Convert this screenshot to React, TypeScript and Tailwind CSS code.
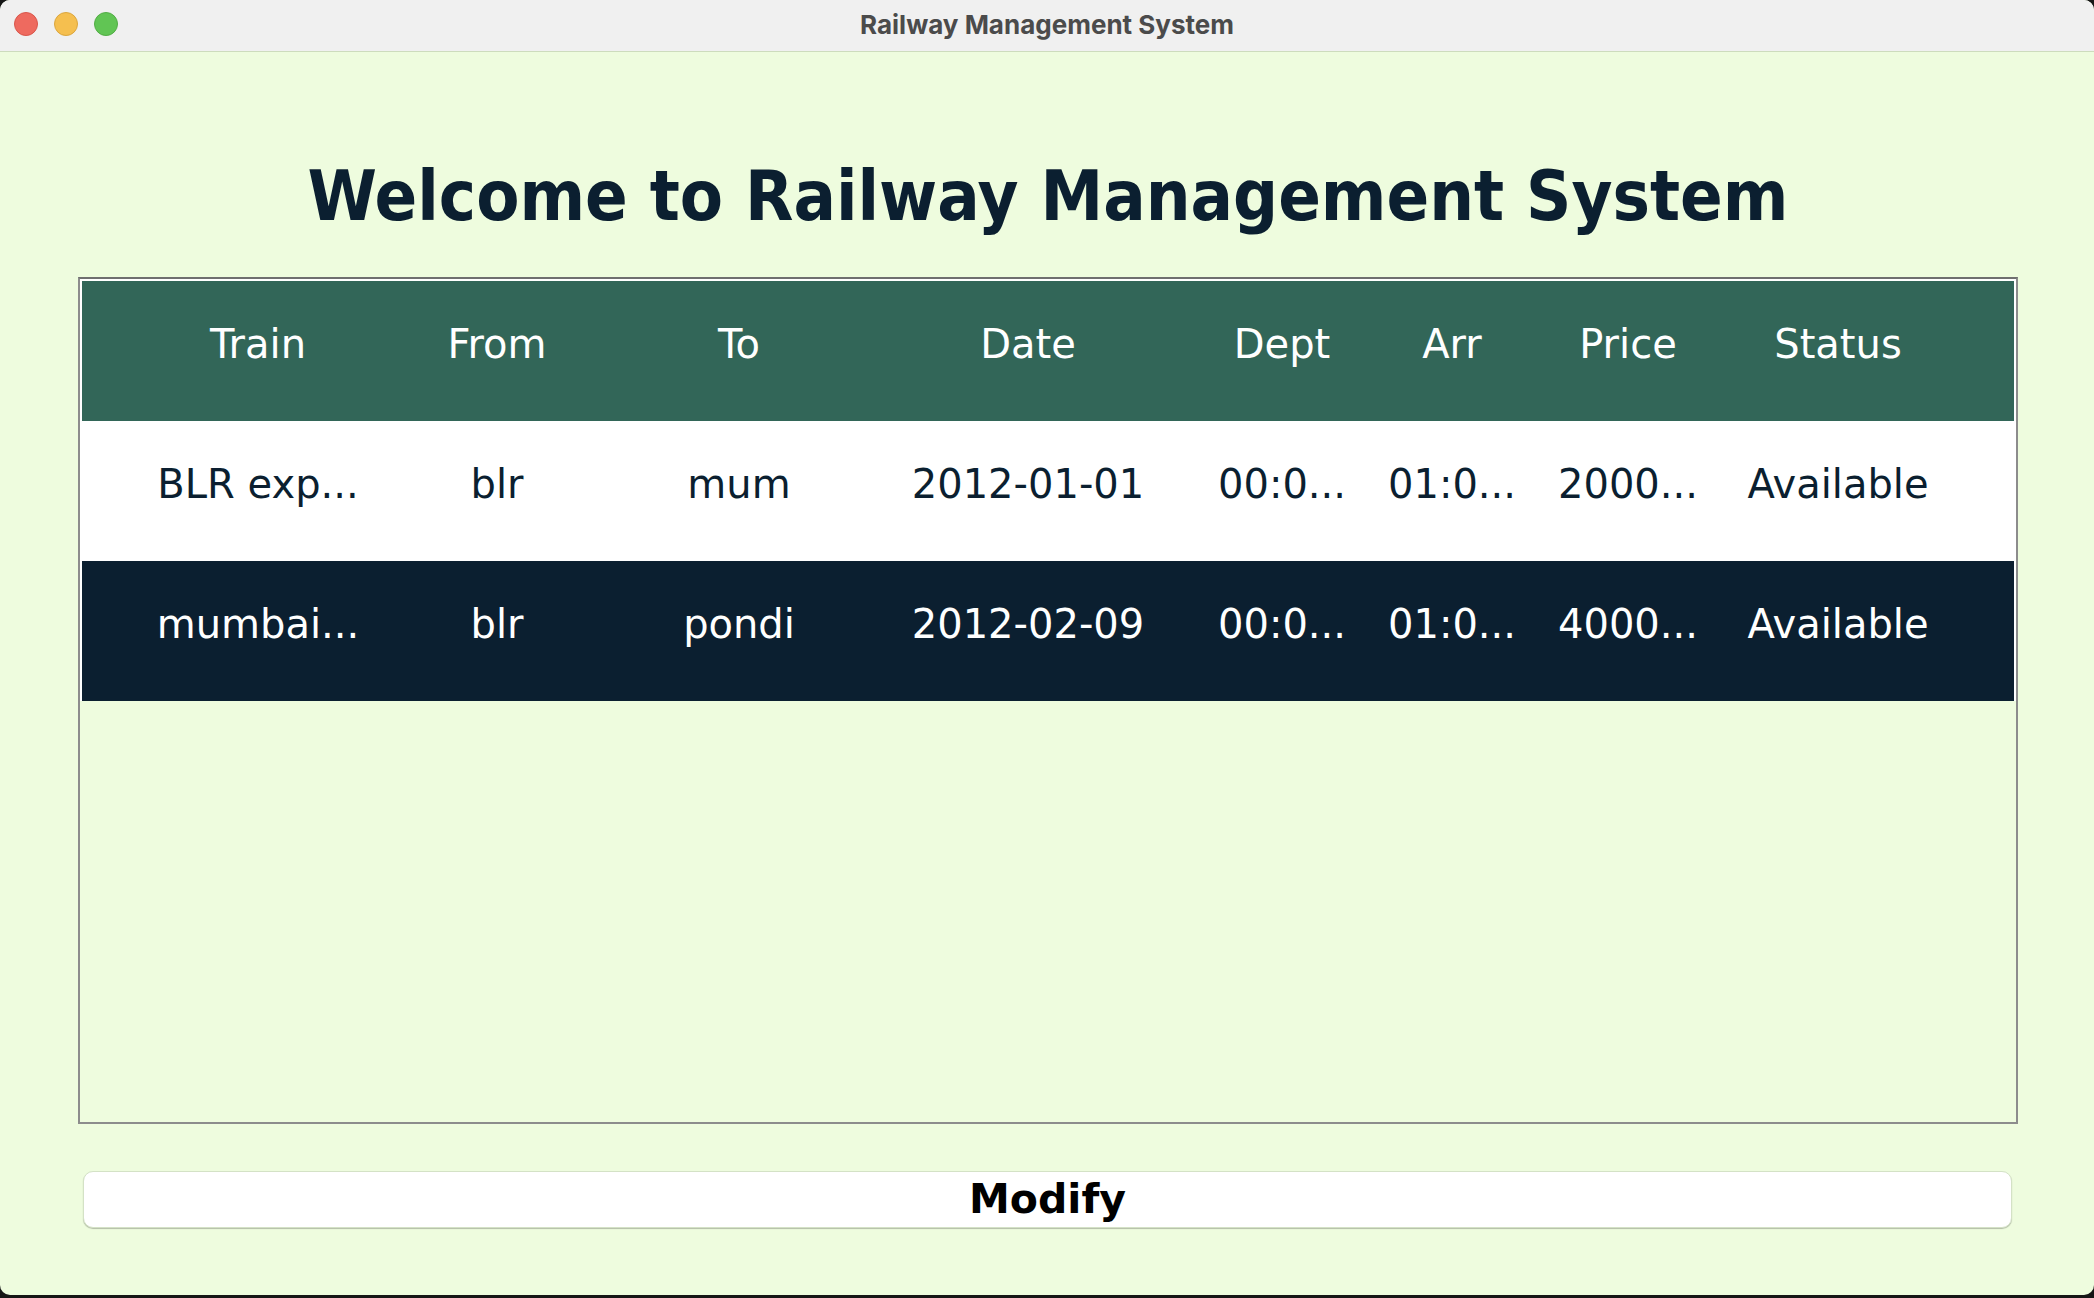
const columns = [
  { key: "train", label: "Train", cls: "ml-[57px] w-[238px]" },
  { key: "from", label: "From", cls: "ml-[1px] w-[238px]" },
  { key: "to", label: "To", cls: "ml-[2px] w-[242px]" },
  { key: "date", label: "Date", cls: "ml-[41px] w-[254px]" },
  { key: "dept", label: "Dept", cls: "ml-[42px] w-[170px]" },
  { key: "arr", label: "Arr", cls: "ml-0 w-[170px]" },
  { key: "price", label: "Price", cls: "ml-[3px] w-[176px]" },
  { key: "status", label: "Status", cls: "ml-[17px] w-[210px]" },
];

const rows: Record<string, string>[] = [
  {
    train: "BLR exp...",
    from: "blr",
    to: "mum",
    date: "2012-01-01",
    dept: "00:0...",
    arr: "01:0...",
    price: "2000...",
    status: "Available",
  },
  {
    train: "mumbai...",
    from: "blr",
    to: "pondi",
    date: "2012-02-09",
    dept: "00:0...",
    arr: "01:0...",
    price: "4000...",
    status: "Available",
  },
];

const TrafficLights = () => (
  <div className="flex items-center gap-[16px] pl-[14px]">
    <span className="h-[24px] w-[24px] rounded-full border border-[#d9564b] bg-[#ee6a5f]" />
    <span className="h-[24px] w-[24px] rounded-full border border-[#dba63e] bg-[#f5bf4f]" />
    <span className="h-[24px] w-[24px] rounded-full border border-[#52ad45] bg-[#61c554]" />
  </div>
);

export default function App() {
  return (
    <div className="h-[1298px] w-[2094px] bg-[#161616]">
      <div className="flex h-[1295px] flex-col overflow-hidden rounded-[10px] bg-[#eefcde]">
        <div className="grid h-[52px] grid-cols-[1fr_auto_1fr] items-center border-b border-[#cddcbd] bg-[#f0f0f0] pb-[3px]">
          <TrafficLights />
          <div className="font-['Inter','Liberation_Sans',sans-serif] text-[26px] font-bold text-[#4b4b4b]">
            Railway Management System
          </div>
          <div />
        </div>

        <div className="flex flex-1 flex-col pl-[78px] pr-[76px]">
          <h1 className="mt-[109px] text-center font-['DejaVu_Sans_Condensed','DejaVu_Sans',sans-serif] text-[70px] leading-none font-bold font-stretch-condensed text-[#0b1f30]">
            Welcome to Railway Management System
          </h1>

          <div className="mt-[46px] h-[847px] border-2 border-[#8c8c8c] border-t-[#6f6f6f]">
            <div className="border-x-2 border-t-2 border-white">
              <div className="flex h-[140px] items-center bg-[#326658] pb-[15px] text-white">
                {columns.map((c) => (
                  <div
                    key={c.key}
                    className={`${c.cls} shrink-0 text-center font-['DejaVu_Sans',sans-serif] text-[40px]`}
                  >
                    {c.label}
                  </div>
                ))}
              </div>
              {rows.map((r, i) => (
                <div
                  key={i}
                  className={`flex h-[140px] items-center pb-[15px] ${i === 1 ? "bg-[#0b1f30] text-white" : "bg-white text-[#0b1f30]"}`}
                >
                  {columns.map((c) => (
                    <div
                      key={c.key}
                      className={`${c.cls} shrink-0 text-center font-['DejaVu_Sans',sans-serif] text-[40px]`}
                    >
                      {r[c.key]}
                    </div>
                  ))}
                </div>
              ))}
            </div>
          </div>

          <div className="mt-[47px] pl-[5px] pr-[6px]">
            <button className="flex h-[57px] w-full items-center justify-center rounded-[10px] border border-[#d4e2c6] bg-white shadow-[0_1px_1px_rgba(0,0,0,0.25)] font-['DejaVu_Sans',sans-serif] text-[41px] font-bold text-black">
              Modify
            </button>
          </div>
        </div>
      </div>
    </div>
  );
}
